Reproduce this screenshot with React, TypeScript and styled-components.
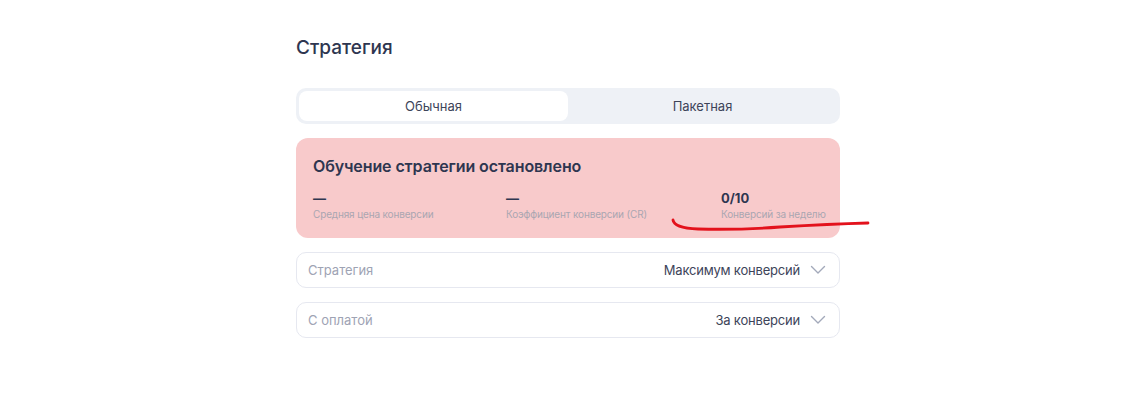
import React from 'react';
import styled, {createGlobalStyle} from 'styled-components';

const GlobalStyle = createGlobalStyle`
    body {
        margin: 0;
        background: #ffffff;
        font-family: Inter, "Noto Sans", sans-serif;
        color: #2e3650;
    }
`;

const Page = styled.div`
    width: 544px;
    margin-left: 296px;
    padding-top: 36px;
`;

const Title = styled.h2`
    margin: 0;
    font-size: 19px;
    line-height: 24px;
    font-weight: 500;
    color: #2e3650;
`;

const Tabs = styled.div`
    margin-top: 28px;
    display: grid;
    grid-template-columns: 1fr 1fr;
    padding: 3px;
    height: 36px;
    box-sizing: border-box;
    background: #eef1f6;
    border-radius: 10px;
`;

const Tab = styled.button`
    border: none;
    font-family: inherit;
    font-size: 13px;
    color: #3d4459;
    border-radius: 8px;
    background: ${(props) => props.$active ? '#ffffff' : 'transparent'};
    cursor: pointer;
    padding: 0;
`;

const Alert = styled.div`
    position: relative;
    margin-top: 14px;
    height: 100px;
    box-sizing: border-box;
    padding: 16px 17px;
    background: #f8cacb;
    border-radius: 12px;
`;

const AlertTitle = styled.div`
    font-size: 16px;
    line-height: 24px;
    font-weight: 600;
    color: #2e3650;
    letter-spacing: -0.1px;
`;

const Stats = styled.div`
    display: grid;
    grid-template-columns: 193px 215px auto;
    margin-top: 12px;
`;

const Stat = styled.div`
    display: flex;
    flex-direction: column;
    white-space: nowrap;
`;

const StatValue = styled.span`
    font-size: 13px;
    line-height: 16px;
    font-weight: 700;
    color: #2e3650;
`;

const StatLabel = styled.span`
    font-size: 10px;
    line-height: 14px;
    color: #aaa6b1;
    letter-spacing: -0.15px;
    margin-top: 1px;
`;

const Scribble = styled.svg`
    position: absolute;
    left: 374px;
    top: 75px;
    overflow: visible;
`;

const Select = styled.div`
    margin-top: 14px;
    height: 36px;
    box-sizing: border-box;
    border: 1px solid #e6e8f0;
    border-radius: 10px;
    display: flex;
    align-items: center;
    padding: 0 13px 0 11px;
    font-size: 13px;
`;

const SelectLabel = styled.span`
    flex: 1;
    color: #9ea3b4;
`;

const SelectValue = styled.span`
    color: #3d4459;
    margin-right: 10px;
    letter-spacing: -0.2px;
`;

const Chevron = () => (
    <svg width="16" height="10" viewBox="0 0 16 10">
        <path d="M1.5 1.5 L8 8 L14.5 1.5" fill="none" stroke="#a3a9ba" strokeWidth="1.4" strokeLinecap="round" strokeLinejoin="round" />
    </svg>
);

const stats = [
    {value: '—', label: 'Средняя цена конверсии'},
    {value: '—', label: 'Коэффициент конверсии (CR)'},
    {value: '0/10', label: 'Конверсий за неделю'},
];

const selects = [
    {label: 'Стратегия', value: 'Максимум конверсий'},
    {label: 'С оплатой', value: 'За конверсии'},
];

const App = () => {
    return (
        <>
            <GlobalStyle />
            <Page>
                <Title>Стратегия</Title>
                <Tabs>
                    <Tab $active>Обычная</Tab>
                    <Tab>Пакетная</Tab>
                </Tabs>
                <Alert>
                    <AlertTitle>Обучение стратегии остановлено</AlertTitle>
                    <Stats>
                        {stats.map((s) => (
                            <Stat key={s.label}>
                                <StatValue>{s.value}</StatValue>
                                <StatLabel>{s.label}</StatLabel>
                            </Stat>
                        ))}
                    </Stats>
                    {/* red hand-drawn mark from the screenshot */}
                    <Scribble width="200" height="20" viewBox="0 0 200 20">
                        <path d="M3 7 Q4 15 28 16 Q70 17 110 14 Q160 11 198 10" fill="none" stroke="#e3121c" strokeWidth="2.8" strokeLinecap="round" />
                    </Scribble>
                </Alert>
                {selects.map((s) => (
                    <Select key={s.label}>
                        <SelectLabel>{s.label}</SelectLabel>
                        <SelectValue>{s.value}</SelectValue>
                        <Chevron />
                    </Select>
                ))}
            </Page>
        </>
    );
};

export default App;
